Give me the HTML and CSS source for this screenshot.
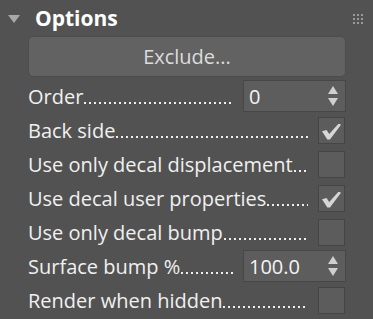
FILE: index.html
```html
<!DOCTYPE html>
<html lang="en">
<head>
  <meta charset="UTF-8">
  <title>Options</title>
  <link rel="stylesheet" href="styles.css">
</head>
<body>

<!-- Rollout header -->
<div class="rollout-head">
  <span class="toggle"></span>
  <span class="title">Options</span>
  <svg class="grip" width="10" height="10" viewBox="0 0 10 10">
    <rect x="0" y="0" width="2" height="2"/><rect x="4" y="0" width="2" height="2"/><rect x="8" y="0" width="2" height="2"/>
    <rect x="0" y="4" width="2" height="2"/><rect x="4" y="4" width="2" height="2"/><rect x="8" y="4" width="2" height="2"/>
    <rect x="0" y="8" width="2" height="2"/><rect x="4" y="8" width="2" height="2"/><rect x="8" y="8" width="2" height="2"/>
  </svg>
</div>

<div class="rollout-body">
  <button class="wide-btn">Exclude...</button>

  <div class="row">
    <span class="label">Order</span><span class="leader"></span>
    <div class="spinner"><span class="value">0</span><span class="arrows"></span></div>
  </div>
  <div class="row">
    <span class="label">Back side</span><span class="leader"></span>
    <div class="check checked"></div>
  </div>
  <div class="row">
    <span class="label">Use only decal displacement</span><span class="leader"></span>
    <div class="check"></div>
  </div>
  <div class="row">
    <span class="label">Use decal user properties</span><span class="leader"></span>
    <div class="check checked"></div>
  </div>
  <div class="row">
    <span class="label">Use only decal bump</span><span class="leader"></span>
    <div class="check"></div>
  </div>
  <div class="row">
    <span class="label">Surface bump %</span><span class="leader"></span>
    <div class="spinner"><span class="value">100.0</span><span class="arrows"></span></div>
  </div>
  <div class="row">
    <span class="label">Render when hidden</span><span class="leader"></span>
    <div class="check"></div>
  </div>
</div>

</body>
</html>
```

FILE: styles.css
```css
body {
  margin: 0;
  background: #525252;
  font-family: "Open Sans", "Noto Sans", sans-serif;
  color: #f0f0f0;
  font-size: 20px;
}
.rollout-head {
  display: flex;
  align-items: center;
  height: 36px;
  padding: 0 10px 0 8px;
}
.toggle {
  width: 0;
  height: 0;
  border-left: 6px solid transparent;
  border-right: 6px solid transparent;
  border-top: 8px solid #a8a8a8;
  margin-right: 15px;
  margin-top: 1px;
}
.title {
  font-weight: bold;
  font-size: 21px;
  color: #ffffff;
  flex: 1;
}
.grip {
  fill: #9a9a9a;
  margin-top: 2px;
}
.rollout-body {
  padding: 0 27px 0 28px;
}
.wide-btn {
  display: block;
  width: 100%;
  height: 41px;
  background: #626262;
  border: 1px solid #4c4c4c;
  border-radius: 5px;
  color: #dcdcdc;
  font-family: inherit;
  font-size: 20px;
  margin-bottom: 2px;
}
.row {
  display: flex;
  align-items: center;
  height: 34px;
}
.label {
  white-space: nowrap;
}
.leader {
  flex: 1;
  align-self: stretch;
  margin: 0 10px 0 1px;
  background-image: linear-gradient(to right, #eeeeee 2px, transparent 2px);
  background-size: 5px 2px;
  background-repeat: repeat-x;
  background-position: 0 23px;
}
.spinner {
  width: 90px;
  height: 30px;
  background: #5d5d5d;
  border: 1px solid #474747;
  display: flex;
  align-items: center;
  justify-content: space-between;
  padding: 0 6px 0 5px;
  box-sizing: content-box;
}
.spinner .value {
  color: #f4f4f4;
}
.arrows {
  position: relative;
  width: 11px;
  height: 20px;
}
.arrows::before, .arrows::after {
  content: "";
  position: absolute;
  left: 0;
  border-left: 5.5px solid transparent;
  border-right: 5.5px solid transparent;
}
.arrows::before {
  top: 0;
  border-bottom: 8px solid #cfcfcf;
}
.arrows::after {
  bottom: 0;
  border-top: 8px solid #cfcfcf;
}
.check {
  width: 25px;
  height: 25px;
  background: #5c5c5c;
  border: 1px solid #454545;
  margin-right: 1px;
  position: relative;
}
.check.checked::after {
  content: "";
  position: absolute;
  left: 3px;
  top: 6px;
  width: 19px;
  height: 16px;
  background: #d6d6d6;
  clip-path: polygon(0 48%, 24% 40%, 38% 66%, 88% 0, 100% 8%, 42% 100%, 28% 100%);
}
```
